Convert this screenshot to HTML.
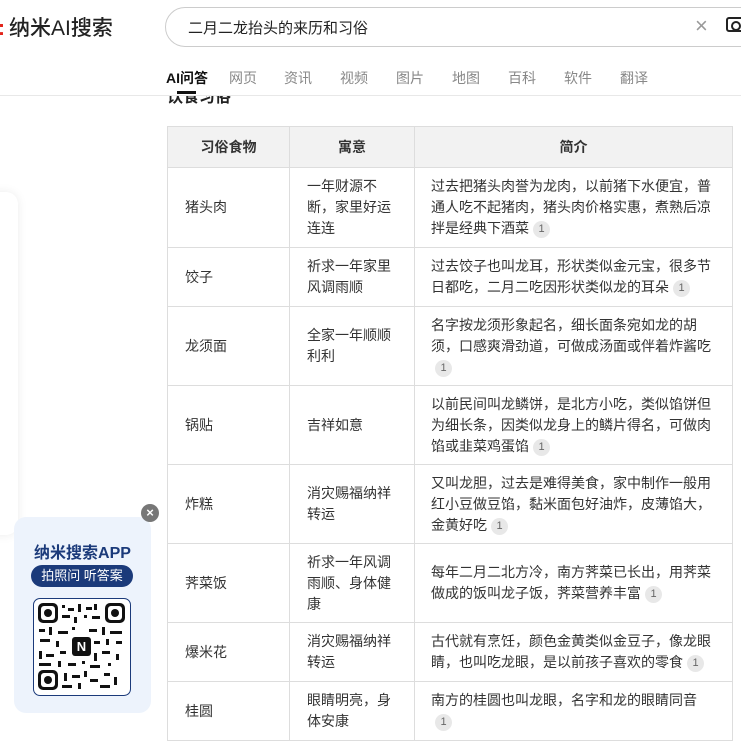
<!DOCTYPE html>
<html><head><meta charset="utf-8"><style>
*{margin:0;padding:0;box-sizing:border-box}
body{width:741px;height:732px;overflow:hidden;background:#fff;font-family:"Liberation Sans","Noto Sans CJK SC",sans-serif;position:relative;color:#333}
.hdr{position:absolute;left:0;top:0;width:741px;height:96px;background:#fff;border-bottom:1px solid #e8e8e8;z-index:5}
.logo{position:absolute;left:-2px;top:12px;font-size:21px;color:#222;font-weight:500}
.logo b{color:#e2231a;font-weight:bold;margin-right:4px}
.search{position:absolute;left:165px;top:7px;width:620px;height:40px;border:1px solid #ccc;border-radius:20px;font-size:15px;color:#222;padding:9px 0 0 22px}
.x{position:absolute;left:695px;top:14px;font-size:22px;color:#999;line-height:24px}
.cam{position:absolute;left:726px;top:17px;width:18px;height:15px;border:2.5px solid #222;border-radius:3px}
.cam:after{content:"";position:absolute;left:3px;top:2px;width:6px;height:6px;border:2px solid #222;border-radius:50%}
.tabs{position:absolute;left:166px;top:68px;font-size:14px;color:#888}
.tabs span{position:absolute;white-space:nowrap}
.tabs .on{color:#111;font-weight:bold}
.ul{position:absolute;left:177px;top:91px;width:19px;height:3px;background:#111;z-index:6}
.h2{position:absolute;left:167px;top:83px;font-size:16px;font-weight:bold;color:#222}
table{position:absolute;left:167px;top:126px;width:566px;border-collapse:collapse;font-size:14px;line-height:21px;color:#333}
td,th{border:1px solid #ddd;vertical-align:middle;text-align:left}
th{background:#f2f2f2;height:41px;text-align:center;font-weight:bold;font-size:14px;color:#333}
td{padding:0 17px}
td.c3{padding:0 16px}
.n{display:inline-block;width:17px;height:17px;border-radius:50%;background:#e8e8e8;color:#666;font-size:11px;line-height:17px;text-align:center;vertical-align:1px;margin-left:4px}
.side{position:absolute;left:-20px;top:192px;width:38px;height:343px;background:#fff;border-radius:12px;box-shadow:0 0 10px rgba(0,0,0,.08)}
.app{position:absolute;left:14px;top:517px;width:137px;height:196px;background:#edf3fc;border-radius:12px}
.app .t{position:absolute;left:0;width:137px;top:22px;text-align:center;color:#1b3a7a;font-weight:bold;font-size:16px}
.app .p{position:absolute;left:17px;top:48px;width:102px;height:22px;border-radius:11px;background:#1b3a7a;color:#fff;font-size:13px;text-align:center;line-height:22px}
.qr{position:absolute;left:19px;top:81px;width:98px;height:98px;background:#fff;border:1.5px solid #1b3a7a;border-radius:7px}
.close{position:absolute;left:141px;top:504px;width:18px;height:18px;border-radius:50%;background:#777;color:#fff;font-size:13px;line-height:18px;text-align:center;font-weight:bold}
</style></head><body>
<div class="side"></div>
<div class="hdr">
<div class="logo"><b>:</b>纳米AI搜索</div>
<div class="search">二月二龙抬头的来历和习俗</div>
<div class="x">×</div><div class="cam"></div>
<div class="tabs"><span class="on" style="left:0">AI问答</span><span style="left:63px">网页</span><span style="left:118px">资讯</span><span style="left:174px">视频</span><span style="left:230px">图片</span><span style="left:286px">地图</span><span style="left:342px">百科</span><span style="left:398px">软件</span><span style="left:454px">翻译</span></div>
</div>
<div class="ul"></div>
<div class="h2">饮食习俗</div>
<table>
<tr><th style="width:122px">习俗食物</th><th style="width:125px">寓意</th><th>简介</th></tr>
<tr style="height:80px"><td>猪头肉</td><td>一年财源不断，家里好运连连</td><td class="c3">过去把猪头肉誉为龙肉，以前猪下水便宜，普通人吃不起猪肉，猪头肉价格实惠，煮熟后凉拌是经典下酒菜<span class="n">1</span></td></tr>
<tr style="height:59px"><td>饺子</td><td>祈求一年家里风调雨顺</td><td class="c3">过去饺子也叫龙耳，形状类似金元宝，很多节日都吃，二月二吃因形状类似龙的耳朵<span class="n">1</span></td></tr>
<tr style="height:79px"><td>龙须面</td><td>全家一年顺顺利利</td><td class="c3">名字按龙须形象起名，细长面条宛如龙的胡须，口感爽滑劲道，可做成汤面或伴着炸酱吃<span class="n">1</span></td></tr>
<tr style="height:79px"><td>锅贴</td><td>吉祥如意</td><td class="c3">以前民间叫龙鳞饼，是北方小吃，类似馅饼但为细长条，因类似龙身上的鳞片得名，可做肉馅或韭菜鸡蛋馅<span class="n">1</span></td></tr>
<tr style="height:79px"><td>炸糕</td><td>消灾赐福纳祥转运</td><td class="c3">又叫龙胆，过去是难得美食，家中制作一般用红小豆做豆馅，黏米面包好油炸，皮薄馅大，金黄好吃<span class="n">1</span></td></tr>
<tr style="height:79px"><td>荠菜饭</td><td>祈求一年风调雨顺、身体健康</td><td class="c3">每年二月二北方冷，南方荠菜已长出，用荠菜做成的饭叫龙子饭，荠菜营养丰富<span class="n">1</span></td></tr>
<tr style="height:59px"><td>爆米花</td><td>消灾赐福纳祥转运</td><td class="c3">古代就有烹饪，颜色金黄类似金豆子，像龙眼睛，也叫吃龙眼，是以前孩子喜欢的零食<span class="n">1</span></td></tr>
<tr style="height:59px"><td>桂圆</td><td>眼睛明亮，身体安康</td><td class="c3">南方的桂圆也叫龙眼，名字和龙的眼睛同音<span class="n">1</span></td></tr>
</table>
<div class="app"><div class="t">纳米搜索APP</div><div class="p">拍照问 听答案</div>
<div class="qr"><svg width="95" height="95" viewBox="0 0 95 95">
<g fill="#111"><rect x="4" y="4" width="20" height="20" rx="5"/><rect x="71" y="4" width="20" height="20" rx="5"/><rect x="4" y="71" width="20" height="20" rx="5"/></g>
<g fill="#fff"><rect x="7" y="7" width="14" height="14" rx="3"/><rect x="74" y="7" width="14" height="14" rx="3"/><rect x="7" y="74" width="14" height="14" rx="3"/></g>
<g fill="#111"><circle cx="14" cy="14" r="4"/><circle cx="81" cy="14" r="4"/><circle cx="14" cy="81" r="4"/>
<rect x="28" y="6" width="3" height="3"/><rect x="34" y="9" width="6" height="3"/><rect x="44" y="5" width="3" height="8"/><rect x="52" y="8" width="6" height="3"/><rect x="60" y="5" width="3" height="6"/>
<rect x="28" y="16" width="8" height="3"/><rect x="40" y="18" width="3" height="6"/><rect x="50" y="16" width="3" height="3"/><rect x="58" y="17" width="8" height="3"/>
<rect x="5" y="30" width="6" height="3"/><rect x="15" y="28" width="3" height="8"/><rect x="24" y="32" width="10" height="3"/><rect x="38" y="28" width="3" height="3"/><rect x="55" y="30" width="8" height="3"/><rect x="68" y="28" width="3" height="8"/><rect x="76" y="32" width="12" height="3"/>
<rect x="6" y="40" width="10" height="3"/><rect x="22" y="42" width="3" height="6"/><rect x="60" y="42" width="6" height="3"/><rect x="72" y="40" width="3" height="6"/><rect x="82" y="42" width="6" height="3"/>
<rect x="5" y="52" width="3" height="8"/><rect x="12" y="55" width="8" height="3"/><rect x="26" y="52" width="6" height="3"/><rect x="60" y="54" width="3" height="8"/><rect x="68" y="52" width="8" height="3"/><rect x="82" y="55" width="3" height="6"/>
<rect x="5" y="64" width="12" height="3"/><rect x="24" y="62" width="3" height="6"/><rect x="34" y="64" width="8" height="3"/><rect x="48" y="62" width="3" height="3"/><rect x="56" y="66" width="10" height="3"/><rect x="74" y="64" width="3" height="3"/>
<rect x="30" y="74" width="3" height="8"/><rect x="38" y="76" width="8" height="3"/><rect x="50" y="72" width="3" height="6"/><rect x="56" y="80" width="8" height="3"/><rect x="70" y="74" width="6" height="3"/><rect x="80" y="78" width="3" height="8"/>
<rect x="28" y="86" width="10" height="3"/><rect x="44" y="84" width="3" height="6"/><rect x="66" y="86" width="10" height="3"/>
<rect x="38" y="38" width="19" height="19" rx="3"/></g>
<text x="47.5" y="52" fill="#fff" font-size="13" font-weight="bold" text-anchor="middle" font-family="Liberation Sans">N</text>
</svg></div></div>
<div class="close">×</div>
</body></html>
